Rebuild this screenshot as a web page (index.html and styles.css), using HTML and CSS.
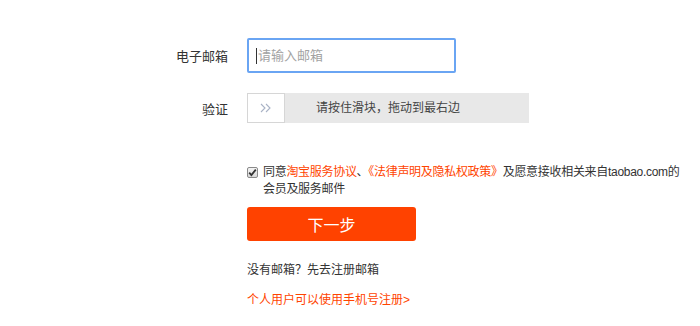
FILE: index.html
```html
<html>
    <head>
        <link rel="stylesheet" href="styles.css">
    </head>
    <body>
        <form class="register" name="register" method="post" action="">

            <div class="row row-email">
                <label class="label" for="email">电子邮箱</label>
                <div class="input-wrap">
                    <input id="email" type="text" name="email" placeholder="请输入邮箱">
                    <span class="caret"></span>
                </div>
            </div>

            <div class="row row-verify">
                <span class="label">验证</span>
                <div class="slider">
                    <span class="slider-text">请按住滑块，拖动到最右边</span>
                    <span class="slider-handle">
                        <svg width="12" height="10" viewBox="0 0 12 10">
                            <path d="M1 1 L5 5 L1 9 M6 1 L10 5 L6 9" fill="none" stroke="#a9b3c6" stroke-width="1.1"/>
                        </svg>
                    </span>
                </div>
            </div>

            <div class="agree">
                <span class="check">
                    <svg width="9" height="9" viewBox="0 0 9 9">
                        <path d="M1.2 4.6 L3.4 7 L7.8 1.6" fill="none" stroke="#333" stroke-width="1.8"/>
                    </svg>
                </span>
                <p class="agree-text">同意<a href="#">淘宝服务协议</a>、<a href="#">《法律声明及隐私权政策》</a>及愿意接收相关来自taobao.com的<br>会员及服务邮件</p>
            </div>

            <div class="buttons">
                <button type="button">下一步</button>
            </div>

            <p class="no-mail">没有邮箱？先去注册邮箱</p>
            <p class="mobile"><a href="#">个人用户可以使用手机号注册&gt;</a></p>

        </form>
    </body>
</html>
```

FILE: styles.css
```css
body {
    margin: 0;
    font-family: "Liberation Sans", "Noto Sans CJK SC", sans-serif;
    font-size: 12px;
    color: #333;
    background: #fff;
}

a {
    color: #ff4400;
    text-decoration: none;
}

.register {
    padding: 38px 0 0 247px;
    margin: 0;
}

.row {
    display: flex;
    align-items: center;
}

.label {
    width: 228px;
    margin-left: -247px;
    margin-right: 19px;
    text-align: right;
    font-size: 13px;
    color: #333;
}

.input-wrap {
    position: relative;
}

input {
    box-sizing: border-box;
    width: 209px;
    height: 35px;
    border: 2px solid #6aa5f3;
    border-radius: 2px;
    padding: 0 8px 0 9px;
    font-family: "Liberation Sans", "Noto Sans CJK SC", sans-serif;
    font-size: 13px;
    color: #333;
}

input::placeholder {
    color: #a3a3a3;
}

input:focus {
    outline: 0;
}

.caret {
    position: absolute;
    left: 9px;
    top: 10px;
    width: 1px;
    height: 16px;
    background: #333;
}

.row-verify {
    margin-top: 20px;
}

.slider {
    position: relative;
    width: 282px;
    height: 30px;
    line-height: 30px;
    background: #e8e8e8;
    text-align: center;
}

.slider-text {
    font-size: 12px;
    color: #444;
}

.slider-handle {
    position: absolute;
    left: 0;
    top: 0;
    box-sizing: border-box;
    width: 38px;
    height: 30px;
    background: #fff;
    border: 1px solid #d6d6d6;
    display: flex;
    align-items: center;
    justify-content: center;
}

.agree {
    display: flex;
    align-items: flex-start;
    margin-top: 41px;
}

.check {
    box-sizing: border-box;
    width: 11px;
    height: 11px;
    margin: 3px 5px 0 0;
    border: 1px solid #8a8a8a;
    border-radius: 2px;
    background: linear-gradient(#f4f4f4, #d8d8d8);
    display: flex;
    align-items: center;
    justify-content: center;
}

.agree-text {
    margin: 0;
    line-height: 17px;
    letter-spacing: -0.3px;
    white-space: nowrap;
}

.buttons {
    margin-top: 9px;
}

button {
    width: 169px;
    height: 34px;
    border: 0;
    border-radius: 3px;
    background: #ff4200;
    color: #fff;
    font-family: "Liberation Sans", "Noto Sans CJK SC", sans-serif;
    font-size: 16px;
    cursor: pointer;
}

.no-mail {
    margin: 21px 0 0 0;
    line-height: 17px;
}

.mobile {
    margin: 13px 0 0 0;
    line-height: 17px;
}
```
